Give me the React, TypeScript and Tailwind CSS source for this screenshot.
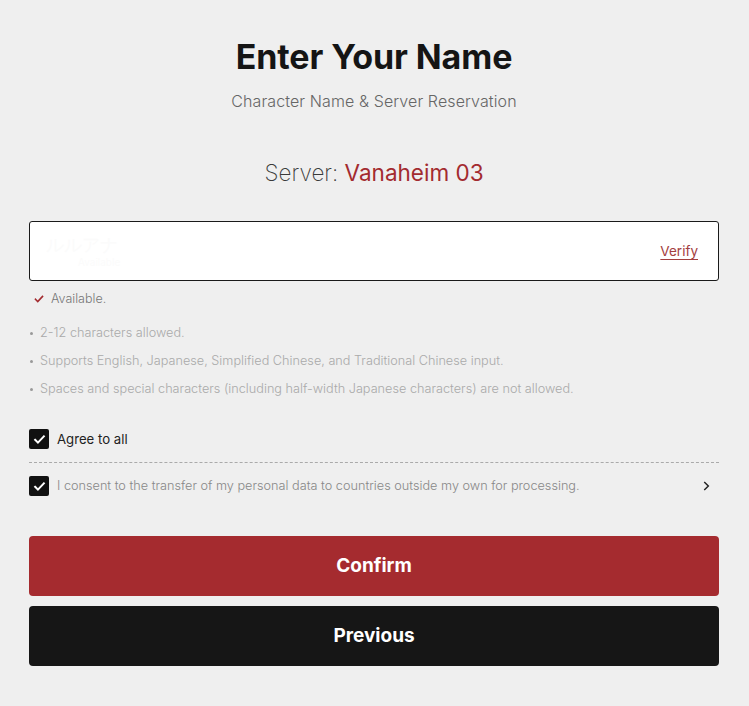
import React from "react";

function Check({ className }: { className?: string }) {
  return (
    <svg viewBox="0 0 24 24" className={className} fill="none" stroke="currentColor" strokeWidth={3.2} strokeLinecap="square" strokeLinejoin="miter">
      <path d="M5 12.5l4.5 4.5L19 7" />
    </svg>
  );
}

function Box() {
  return (
    <span className="w-[20px] h-[20px] bg-[#111111] rounded-[2px] flex items-center justify-center shrink-0">
      <Check className="w-[15px] h-[15px] text-white" />
    </span>
  );
}

export default function App() {
  return (
    <div className="min-h-[706px] bg-[#efefef] font-['Inter',sans-serif] px-[29px] pt-[37px]">
      <div className="w-[690px] flex flex-col">
        <h1 className="text-center text-[34px] leading-[40px] font-bold text-[#151515] tracking-[-0.1px]">Enter Your Name</h1>
        <p className="text-center text-[16px] leading-[20px] font-light text-[#666666] mt-[14px] tracking-[0.1px]">Character Name &amp; Server Reservation</p>
        <p className="text-center text-[22.5px] leading-[30px] mt-[47px]">
          <span className="font-extralight text-[#3a3a3a]">Server: </span>
          <span className="font-normal text-[#a32b2f]">Vanaheim 03</span>
        </p>
        <div className="mt-[33px] h-[60px] bg-white border border-[#1a1a1a] rounded-[3px] flex items-center pl-[16px] pr-[20px]">
          <div className="flex-1 flex flex-col">
            <span className="text-[18px] leading-[22px] text-[#fbfbfb]">ルルアナ</span>
            <span className="text-[10px] leading-[12px] text-[#fbfbfb] pl-[32px]">Available</span>
          </div>
          <span className="text-[13.5px] text-[#a34040] underline underline-offset-[3px] decoration-[1px]">Verify</span>
        </div>
        <div className="flex items-center gap-[6px] mt-[10px] pl-[4px]">
          <Check className="w-[12px] h-[12px] text-[#a32b2f]" />
          <span className="text-[12.5px] leading-[16px] font-light text-[#777777]">Available.</span>
        </div>
        <ul className="mt-[18px] flex flex-col gap-[12px] text-[12.7px] leading-[16px] font-light text-[#aaaaaa]">
          <li className="flex items-center gap-[7px]"><span className="w-[3px] h-[3px] bg-[#999999] rounded-full ml-[1px]"></span>2-12 characters allowed.</li>
          <li className="flex items-center gap-[7px]"><span className="w-[3px] h-[3px] bg-[#999999] rounded-full ml-[1px]"></span>Supports English, Japanese, Simplified Chinese, and Traditional Chinese input.</li>
          <li className="flex items-center gap-[7px]"><span className="w-[3px] h-[3px] bg-[#999999] rounded-full ml-[1px]"></span>Spaces and special characters (including half-width Japanese characters) are not allowed.</li>
        </ul>
        <div className="mt-[32px] flex items-center gap-[8px] pb-[13px] border-b border-dashed border-[#aaaaaa]">
          <Box />
          <span className="text-[13.2px] leading-[18px] text-[#222222]">Agree to all</span>
        </div>
        <div className="mt-[13px] flex items-center gap-[8px]">
          <Box />
          <span className="flex-1 text-[12.7px] leading-[16px] font-light text-[#888888]">I consent to the transfer of my personal data to countries outside my own for processing.</span>
          <svg viewBox="0 0 24 24" className="w-[14px] h-[14px] mr-[6px] text-[#222222]" fill="none" stroke="currentColor" strokeWidth={2.5}>
            <path d="M9 5l7 7-7 7" />
          </svg>
        </div>
        <button className="mt-[40px] h-[60px] rounded-[4px] bg-[#a52b2f] text-white text-[19px] font-bold">Confirm</button>
        <button className="mt-[10px] h-[60px] rounded-[4px] bg-[#161616] text-white text-[19px] font-bold">Previous</button>
      </div>
    </div>
  );
}
